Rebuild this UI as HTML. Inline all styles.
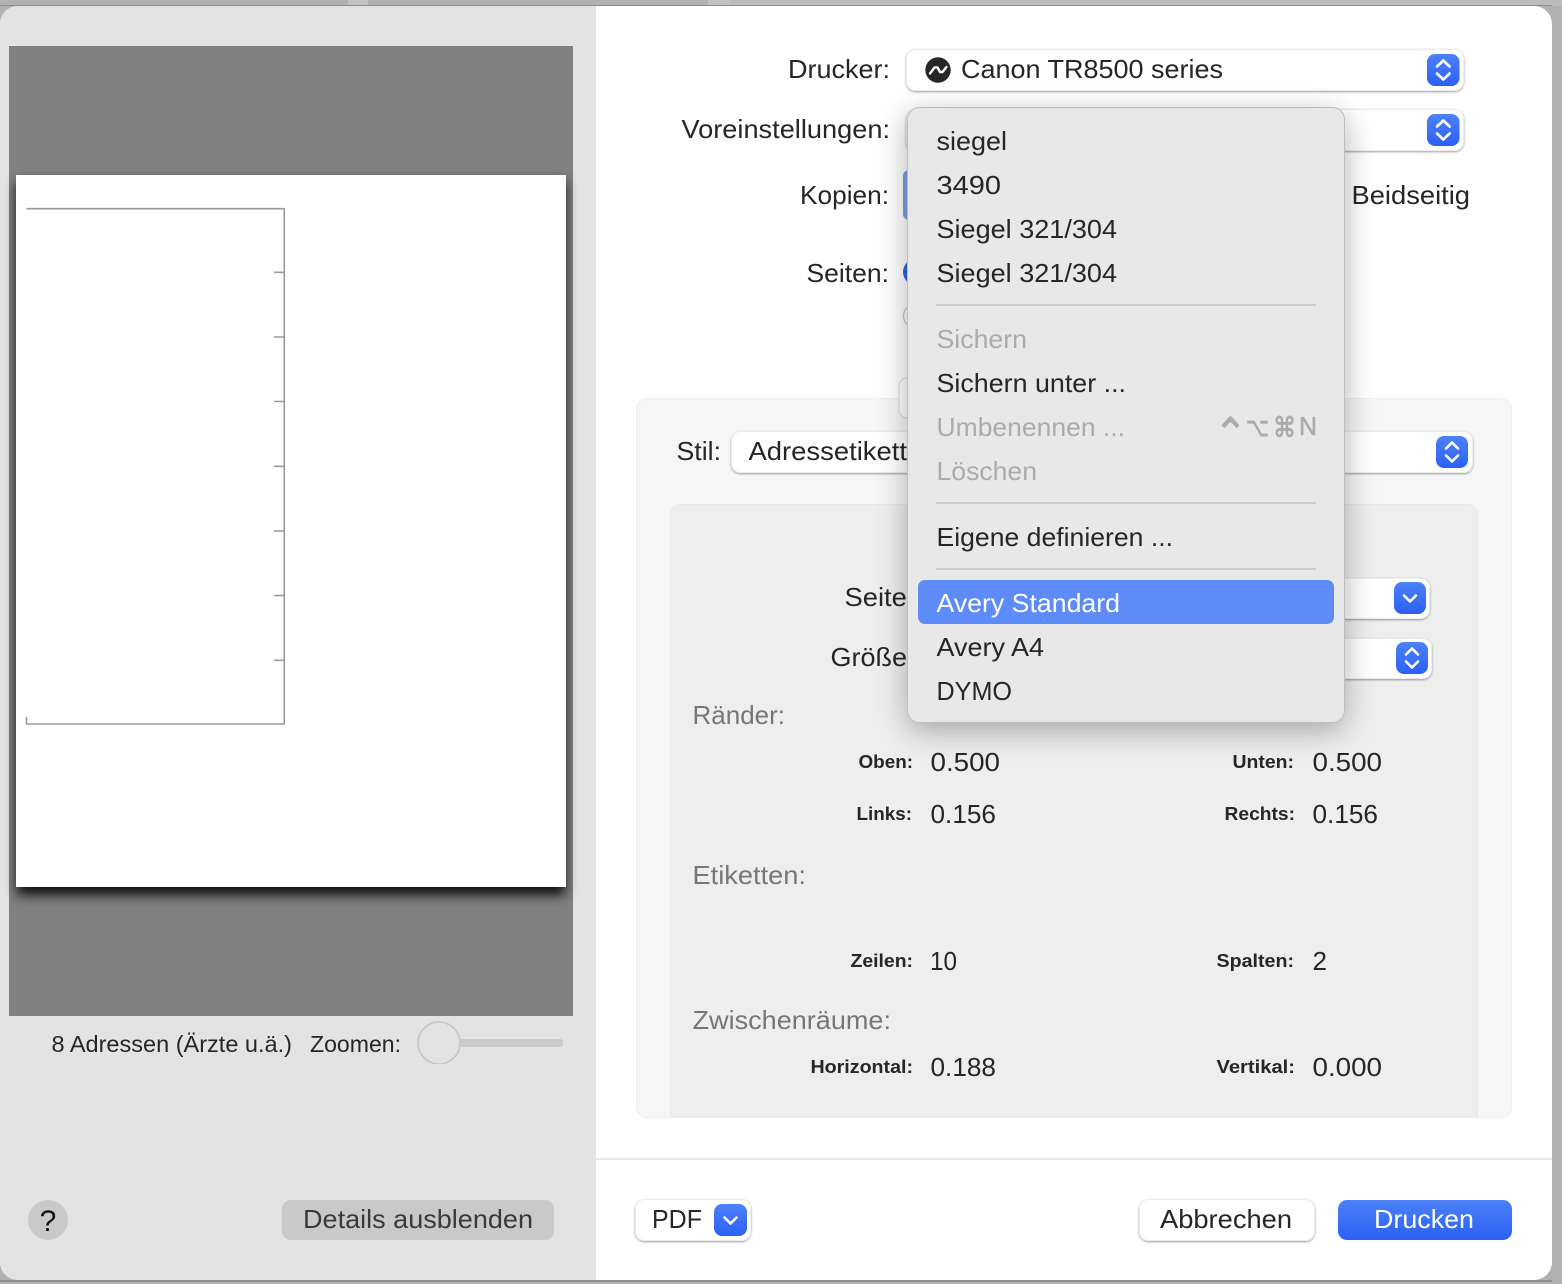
<!DOCTYPE html>
<html lang="de"><head><meta charset="utf-8"><title>Drucken</title>
<style>
html,body{margin:0;padding:0;width:1562px;height:1284px;overflow:hidden;background:#b0b0b0}
svg{display:block;position:absolute;left:0;top:0}
text{font-family:"Liberation Sans",sans-serif;font-size:26px;fill:#262626}
.g{fill:#ababab}.m{fill:#777}.w{fill:#fff}
.b{font-size:18px;font-weight:bold}
.s{font-size:23px}
.k{font-family:"DejaVu Sans",sans-serif;fill:#ababab;stroke:#ababab;stroke-width:.8px}
</style></head><body>
<svg width="1562" height="1284" viewBox="0 0 1562 1284" xmlns="http://www.w3.org/2000/svg">
<defs>
<linearGradient id="blue" x1="0" y1="0" x2="0" y2="1"><stop offset="0" stop-color="#4c82f9"/><stop offset="1" stop-color="#2b60f5"/></linearGradient>
<filter id="ctl" x="-5%" y="-20%" width="110%" height="150%"><feDropShadow dx="0" dy="1" stdDeviation="1" flood-color="#000" flood-opacity=".38"/></filter>
<filter id="menu" x="-20%" y="-15%" width="140%" height="130%"><feDropShadow dx="0" dy="8" stdDeviation="15" flood-color="#000" flood-opacity=".3"/></filter>
<filter id="page" x="-10%" y="-10%" width="120%" height="120%"><feGaussianBlur stdDeviation="6"/></filter>
<clipPath id="win"><rect x="0" y="6" width="1552" height="1274" rx="18"/></clipPath>
<clipPath id="knob"><rect x="410" y="1020" width="60" height="44"/></clipPath>
<clipPath id="p1"><rect x="637" y="399" width="875" height="719" rx="10"/></clipPath>
</defs>

<!-- backdrop -->
<rect width="1562" height="1284" fill="#b1b1b1"/>
<rect x="348" y="0" width="20" height="6" fill="#c2c2c2"/>
<rect x="708" y="0" width="22" height="6" fill="#c2c2c2"/>
<rect x="730" y="0" width="832" height="6" fill="#bcbcbc"/>
<rect x="0" y="5" width="1552" height="1" fill="#8f8f8f"/>
<rect x="0" y="1280" width="1552" height="2" fill="#8f8f8f"/>

<g clip-path="url(#win)">
<rect x="0" y="6" width="1552" height="1274" fill="#fff"/>
<rect x="0" y="6" width="596" height="1274" fill="#e3e3e3"/>

<!-- preview -->
<rect x="9" y="46" width="564" height="970" fill="#808080"/>
<rect x="17" y="182" width="548" height="713" fill="#000" opacity=".9" filter="url(#page)"/>
<rect x="16" y="175" width="550" height="712" fill="#fff"/>
<g fill="none" stroke="#9a9a9a" stroke-width="1.6">
<path d="M26.5 208.7H284.3V724H26.5V717"/>
<path d="M274 272.3H284M274 337H284M274 401.5H284M274 466.3H284M274 531H284M274 595.6H284M274 660.3H284"/>
</g>

<!-- left bottom -->
<text class="s" x="51.5" y="1052" textLength="240.5" lengthAdjust="spacingAndGlyphs">8 Adressen (Ärzte u.ä.)</text>
<text class="s" x="310" y="1052" textLength="91" lengthAdjust="spacingAndGlyphs">Zoomen:</text>
<rect x="452" y="1039" width="111" height="8" rx="3" fill="#cbcbcb"/>
<g clip-path="url(#knob)"><circle cx="439" cy="1043" r="21" fill="#e3e3e3" stroke="#c6c6c6" stroke-width="1.6"/></g>
<circle cx="48" cy="1220" r="20" fill="#c9c9c9"/>
<text x="48" y="1231" text-anchor="middle" style="font-size:30px;fill:#111">?</text>
<rect x="282" y="1200" width="272" height="40" rx="9" fill="#c9c9c9"/>
<text x="303" y="1228" textLength="230" lengthAdjust="spacingAndGlyphs" style="fill:#3a3a3a">Details ausblenden</text>

<!-- right top labels -->
<text x="788" y="78" textLength="102" lengthAdjust="spacingAndGlyphs">Drucker:</text>
<text x="681.5" y="138" textLength="208.5" lengthAdjust="spacingAndGlyphs">Voreinstellungen:</text>
<text x="800" y="204" textLength="89" lengthAdjust="spacingAndGlyphs">Kopien:</text>
<text x="806.5" y="282" textLength="82.5" lengthAdjust="spacingAndGlyphs">Seiten:</text>
<text x="1351.5" y="204" textLength="118.5" lengthAdjust="spacingAndGlyphs">Beidseitig</text>

<!-- printer popups -->
<rect x="906.5" y="49.5" width="557" height="41" rx="9" fill="#fff" stroke="#ececec" stroke-width="1" filter="url(#ctl)"/>
<circle cx="938" cy="70" r="12.7" fill="#262626"/>
<path d="M930 73.5L934.5 67.5L937.5 67.5L940 72L942.5 72L946.5 67" fill="none" stroke="#fff" stroke-width="2.4" stroke-linecap="round" stroke-linejoin="round"/>
<text x="961" y="78" textLength="262" lengthAdjust="spacingAndGlyphs">Canon TR8500 series</text>
<rect x="1427" y="54" width="32.5" height="32" rx="8" fill="url(#blue)"/>
<path d="M1437 66.5L1443.3 60.5L1449.6 66.5M1437 73.5L1443.3 79.5L1449.6 73.5" fill="none" stroke="#fff" stroke-width="2.6" stroke-linecap="round" stroke-linejoin="round"/>
<rect x="906.5" y="109.5" width="557" height="41" rx="9" fill="#fff" stroke="#ececec" stroke-width="1" filter="url(#ctl)"/>
<rect x="1427" y="114" width="32.5" height="32" rx="8" fill="url(#blue)"/>
<path d="M1437 126.5L1443.3 120.5L1449.6 126.5M1437 133.5L1443.3 139.5L1449.6 133.5" fill="none" stroke="#fff" stroke-width="2.6" stroke-linecap="round" stroke-linejoin="round"/>

<!-- bits peeking beside the menu -->
<rect x="903" y="170" width="30" height="50" rx="6" fill="#7b9fe6"/>
<circle cx="916" cy="272" r="13" fill="#2e62e6"/>
<circle cx="915" cy="316" r="11.5" fill="#fff" stroke="#c8c8c8" stroke-width="1.4"/>

<!-- settings panel -->
<rect x="636.5" y="398.5" width="875" height="719" rx="10" fill="#f6f6f6" stroke="#eeeeee" stroke-width="1"/>
<rect x="899" y="378" width="40" height="40" rx="8" fill="#fff" stroke="#d8d8d8" stroke-width="1"/>
<text x="676.5" y="460" textLength="44.5" lengthAdjust="spacingAndGlyphs">Stil:</text>
<rect x="731.5" y="431.5" width="741" height="41" rx="9" fill="#fff" stroke="#ececec" stroke-width="1" filter="url(#ctl)"/>
<text x="748.5" y="460" textLength="189" lengthAdjust="spacingAndGlyphs">Adressetiketten</text>
<rect x="1436" y="436" width="32" height="32" rx="8" fill="url(#blue)"/>
<path d="M1446 448.5L1452 442.5L1458 448.5M1446 455.5L1452 461.5L1458 455.5" fill="none" stroke="#fff" stroke-width="2.6" stroke-linecap="round" stroke-linejoin="round"/>

<g clip-path="url(#p1)">
<rect x="670.5" y="504.5" width="807" height="620" rx="10" fill="#eeeeee" stroke="#e7e7e7" stroke-width="1"/>
</g>
<text x="844.5" y="606" textLength="70" lengthAdjust="spacingAndGlyphs">Seite:</text>
<text x="830.5" y="666" textLength="84" lengthAdjust="spacingAndGlyphs">Größe:</text>
<rect x="1200" y="578.5" width="229.5" height="40" rx="9" fill="#fff" stroke="#ececec" stroke-width="1" filter="url(#ctl)"/>
<rect x="1394" y="582" width="32" height="32" rx="8" fill="url(#blue)"/>
<path d="M1404 595.5L1410 601.5L1416 595.5" fill="none" stroke="#fff" stroke-width="2.6" stroke-linecap="round" stroke-linejoin="round"/>
<rect x="1200" y="638.5" width="231.5" height="40" rx="9" fill="#fff" stroke="#ececec" stroke-width="1" filter="url(#ctl)"/>
<rect x="1396" y="642" width="32" height="32" rx="8" fill="url(#blue)"/>
<path d="M1406 654.5L1412 648.5L1418 654.5M1406 661.5L1412 667.5L1418 661.5" fill="none" stroke="#fff" stroke-width="2.6" stroke-linecap="round" stroke-linejoin="round"/>

<text class="m" x="692.5" y="724" textLength="92.5" lengthAdjust="spacingAndGlyphs">Ränder:</text>
<text class="m" x="692.5" y="884" textLength="113.5" lengthAdjust="spacingAndGlyphs">Etiketten:</text>
<text class="m" x="692.5" y="1029" textLength="198.5" lengthAdjust="spacingAndGlyphs">Zwischenräume:</text>

<text class="b" x="858.5" y="768" textLength="54.5" lengthAdjust="spacingAndGlyphs">Oben:</text>
<text class="b" x="1232.5" y="768" textLength="61.5" lengthAdjust="spacingAndGlyphs">Unten:</text>
<text class="b" x="856.5" y="820" textLength="55.5" lengthAdjust="spacingAndGlyphs">Links:</text>
<text class="b" x="1224.5" y="820" textLength="70.5" lengthAdjust="spacingAndGlyphs">Rechts:</text>
<text class="b" x="850.5" y="967" textLength="62.5" lengthAdjust="spacingAndGlyphs">Zeilen:</text>
<text class="b" x="1216.5" y="967" textLength="77.5" lengthAdjust="spacingAndGlyphs">Spalten:</text>
<text class="b" x="810.5" y="1073" textLength="102.5" lengthAdjust="spacingAndGlyphs">Horizontal:</text>
<text class="b" x="1216.5" y="1073" textLength="78.5" lengthAdjust="spacingAndGlyphs">Vertikal:</text>

<text x="930.5" y="771" textLength="69.5" lengthAdjust="spacingAndGlyphs">0.500</text>
<text x="1312.5" y="771" textLength="69.5" lengthAdjust="spacingAndGlyphs">0.500</text>
<text x="930.5" y="823" textLength="65.5" lengthAdjust="spacingAndGlyphs">0.156</text>
<text x="1312.5" y="823" textLength="65.5" lengthAdjust="spacingAndGlyphs">0.156</text>
<text x="930" y="970" textLength="27" lengthAdjust="spacingAndGlyphs">10</text>
<text x="1312.5" y="970" textLength="14.5" lengthAdjust="spacingAndGlyphs">2</text>
<text x="930.5" y="1076" textLength="65.5" lengthAdjust="spacingAndGlyphs">0.188</text>
<text x="1312.5" y="1076" textLength="69.5" lengthAdjust="spacingAndGlyphs">0.000</text>

<!-- footer -->
<rect x="596" y="1158" width="956" height="2" fill="#e6e6e6"/>
<rect x="635.5" y="1199.5" width="115" height="41" rx="9" fill="#fff" stroke="#ececec" stroke-width="1" filter="url(#ctl)"/>
<text x="652" y="1228" textLength="50" lengthAdjust="spacingAndGlyphs">PDF</text>
<rect x="714" y="1204" width="33" height="32" rx="8" fill="url(#blue)"/>
<path d="M724.5 1217.5L730.5 1223.5L736.5 1217.5" fill="none" stroke="#fff" stroke-width="2.6" stroke-linecap="round" stroke-linejoin="round"/>
<rect x="1139.5" y="1199.5" width="175" height="41" rx="9" fill="#fff" stroke="#ececec" stroke-width="1" filter="url(#ctl)"/>
<text x="1160" y="1228" textLength="132" lengthAdjust="spacingAndGlyphs">Abbrechen</text>
<rect x="1338" y="1200" width="174" height="40" rx="9" fill="url(#blue)"/>
<text class="w" x="1374" y="1228" textLength="100" lengthAdjust="spacingAndGlyphs">Drucken</text>

<!-- dropdown menu -->
<rect x="907.5" y="107.5" width="437" height="615" rx="12" fill="#e8e8e8" stroke="#bdbdbd" stroke-width="1" filter="url(#menu)"/>
<text x="936.5" y="150" textLength="70.5" lengthAdjust="spacingAndGlyphs">siegel</text>
<text x="936.5" y="194" textLength="64.5" lengthAdjust="spacingAndGlyphs">3490</text>
<text x="936.5" y="238" textLength="180.5" lengthAdjust="spacingAndGlyphs">Siegel 321/304</text>
<text x="936.5" y="282" textLength="180.5" lengthAdjust="spacingAndGlyphs">Siegel 321/304</text>
<rect x="936" y="304" width="380" height="2" fill="#cccccc"/>
<text class="g" x="936.5" y="348" textLength="90.5" lengthAdjust="spacingAndGlyphs">Sichern</text>
<text x="936.5" y="392" textLength="189.5" lengthAdjust="spacingAndGlyphs">Sichern unter ...</text>
<text class="g" x="936.5" y="436" textLength="188.5" lengthAdjust="spacingAndGlyphs">Umbenennen ...</text>
<text class="k" x="1214" y="449" textLength="33" lengthAdjust="spacingAndGlyphs" style="font-size:44px">⌃</text>
<text class="k" x="1246" y="436" textLength="23" lengthAdjust="spacingAndGlyphs" style="font-size:26px">⌥</text>
<text class="k" x="1273" y="437" textLength="23" lengthAdjust="spacingAndGlyphs" style="font-size:28px">⌘</text>
<text class="g" x="1299" y="435" textLength="18" lengthAdjust="spacingAndGlyphs" style="stroke:#ababab;stroke-width:.6px">N</text>
<text class="g" x="936.5" y="480" textLength="100.5" lengthAdjust="spacingAndGlyphs">Löschen</text>
<rect x="936" y="502" width="380" height="2" fill="#cccccc"/>
<text x="936.5" y="546" textLength="236.5" lengthAdjust="spacingAndGlyphs">Eigene definieren ...</text>
<rect x="936" y="568" width="380" height="2" fill="#cccccc"/>
<rect x="918" y="580" width="416" height="44" rx="7" fill="#5d8bf8"/>
<text class="w" x="936.5" y="612" textLength="183.5" lengthAdjust="spacingAndGlyphs">Avery Standard</text>
<text x="936.5" y="656" textLength="107.5" lengthAdjust="spacingAndGlyphs">Avery A4</text>
<text x="936.5" y="700" textLength="75.5" lengthAdjust="spacingAndGlyphs">DYMO</text>
</g>
</svg>
</body></html>
